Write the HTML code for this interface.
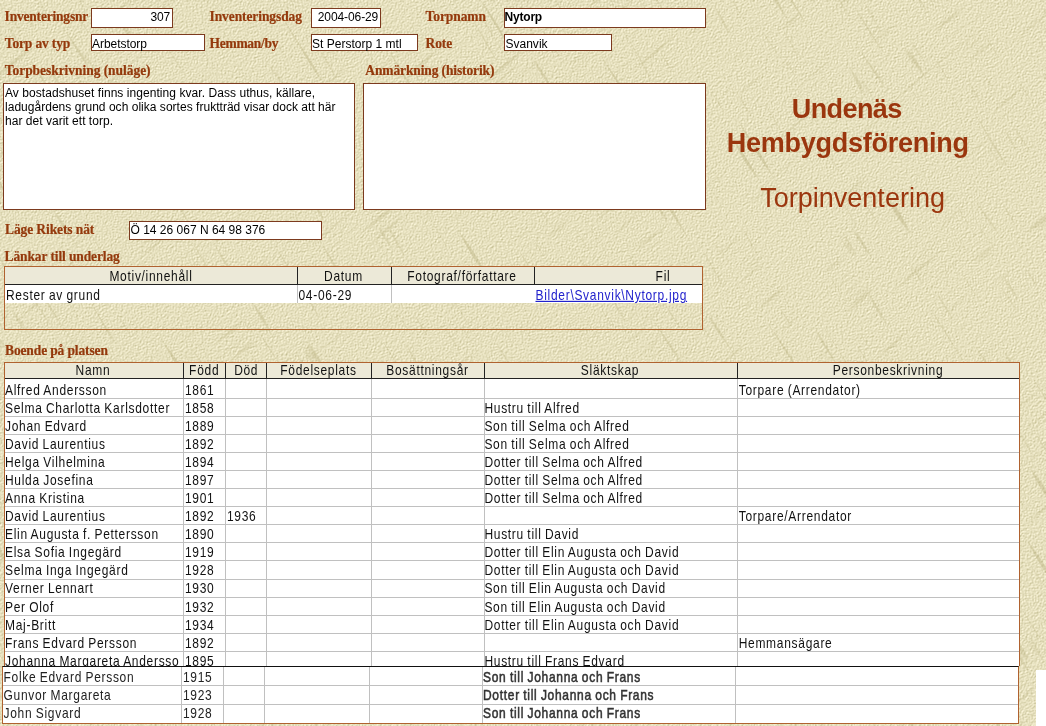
<!DOCTYPE html>
<html lang="sv"><head><meta charset="utf-8"><title>Torpinventering</title>
<style>
html,body{margin:0;padding:0}
body{width:1046px;height:726px;position:relative;overflow:hidden;background:#e4debc;font-family:"Liberation Sans",sans-serif;font-size:12px;color:#000}
.a{position:absolute;white-space:nowrap;line-height:1}
.box{position:absolute;background:#fff;border:1px solid #7c3a1e;box-sizing:border-box}
.lb{font-family:"Liberation Serif",serif;font-weight:bold;font-size:13.5px;color:#94390c;-webkit-text-stroke:.2px #94390c;transform:scaleY(1.04);transform-origin:0 100%}
.in{font-size:12px}
.b{font-weight:bold}
.t1{font-size:27px;font-weight:bold;color:#9b360e}
.t2{font-size:27px;color:#9b360e}
.c{font-size:12px;letter-spacing:.7px;word-spacing:-.6px;color:#111;transform:scaleY(1.2);transform-origin:50% 100%}
.g{color:#333;-webkit-text-stroke:.45px #333}
.g2{color:#222}
.hl{position:absolute;height:1px;background:#c0c0c0}
.vl{position:absolute;width:1px;background:#c0c0c0}
a{color:#2222cc}
</style></head><body>
<svg width="1046" height="726" style="position:absolute;left:0;top:0" aria-hidden="true">
<filter id="p" x="0" y="0" width="100%" height="100%" color-interpolation-filters="sRGB">
<feTurbulence type="fractalNoise" baseFrequency="0.8" numOctaves="2" seed="7" result="n"/>
<feDiffuseLighting in="n" surfaceScale="0.7" diffuseConstant="1" lighting-color="#fff" result="l"><feDistantLight azimuth="225" elevation="50"/></feDiffuseLighting>
<feColorMatrix in="l" type="matrix" values="0.7 0 0 0 0.366  0 0.7 0 0 0.343  0 0 0.9 0 0.058  0 0 0 1 0"/>
</filter>
<filter id="s" x="0" y="0" width="100%" height="100%" color-interpolation-filters="sRGB">
<feTurbulence type="fractalNoise" baseFrequency="0.016 0.22" numOctaves="1" seed="11"/>
<feColorMatrix type="matrix" values="0 0 0 0 0.74  0 0 0 0 0.71  0 0 0 0 0.52  10 0 0 0 -6.7"/>
</filter>
<filter id="s2" x="0" y="0" width="100%" height="100%" color-interpolation-filters="sRGB">
<feTurbulence type="fractalNoise" baseFrequency="0.016 0.22" numOctaves="1" seed="23"/>
<feColorMatrix type="matrix" values="0 0 0 0 0.74  0 0 0 0 0.71  0 0 0 0 0.52  10 0 0 0 -6.7"/>
</filter>
<rect width="1046" height="726" filter="url(#p)"/>
<g transform="rotate(58)" opacity="0.45"><rect x="0" y="-900" width="1400" height="1300" filter="url(#s)"/></g>
<g transform="rotate(-40)" opacity="0.3"><rect x="-500" y="0" width="1400" height="1300" filter="url(#s2)"/></g>
</svg>
<div id="w" style="position:absolute;left:0;top:0;width:1046px;height:726px;will-change:opacity">

<div class="box" style="left:91px;top:8px;width:82px;height:20px"></div>
<div class="box" style="left:311px;top:8px;width:70px;height:20px"></div>
<div class="box" style="left:504px;top:8px;width:202px;height:20px"></div>
<div class="box" style="left:91px;top:34px;width:114px;height:17px"></div>
<div class="box" style="left:311px;top:34px;width:107px;height:17px"></div>
<div class="box" style="left:504px;top:34px;width:108px;height:17px"></div>
<div class="box" style="left:3px;top:83px;width:352px;height:127px"></div>
<div class="box" style="left:363px;top:83px;width:343px;height:127px"></div>
<div class="box" style="left:129px;top:221px;width:193px;height:19px"></div>
<div style="position:absolute;left:4px;top:266px;width:699px;height:64px;border:1px solid #b0622f;box-sizing:border-box"></div>
<div style="position:absolute;left:5px;top:267px;width:697px;height:17px;background:#ece9d8"></div>
<div style="position:absolute;left:5px;top:284px;width:697px;height:1px;background:#222"></div>
<div style="position:absolute;left:5px;top:285px;width:697px;height:18px;background:#fff"></div>
<div style="position:absolute;left:297px;top:267px;width:1px;height:18px;background:#222"></div>
<div style="position:absolute;left:391px;top:267px;width:1px;height:18px;background:#222"></div>
<div style="position:absolute;left:534px;top:267px;width:1px;height:18px;background:#222"></div>
<div class="vl" style="left:297px;top:285px;height:18px"></div>
<div class="vl" style="left:391px;top:285px;height:18px"></div>
<span class="a c" style="left:51px;width:200px;text-align:center;top:271px">Motiv/innehåll</span>
<span class="a c" style="left:243.5px;width:200px;text-align:center;top:271px">Datum</span>
<span class="a c" style="left:362px;width:200px;text-align:center;top:271px">Fotograf/författare</span>
<span class="a c" style="left:563px;width:200px;text-align:center;top:271px">Fil</span>
<span class="a c" style="left:6px;top:290px">Rester av grund</span>
<span class="a c" style="left:298.5px;top:290px">04-06-29</span>
<span class="a c" style="left:535.5px;top:290px"><a href="#" style="text-decoration:underline">Bilder\Svanvik\Nytorp.jpg</a></span>
<div style="position:absolute;left:4px;top:362px;width:1016px;height:304px;border:1px solid #b0622f;border-bottom:none;box-sizing:border-box;background:#fff"></div>
<div style="position:absolute;left:5px;top:363px;width:1014px;height:15px;background:#ece9d8"></div>
<div style="position:absolute;left:5px;top:378px;width:1014px;height:1px;background:#222"></div>
<div style="position:absolute;left:183px;top:363px;width:1px;height:16px;background:#222"></div>
<div class="vl" style="left:183px;top:379px;height:287px"></div>
<div style="position:absolute;left:225px;top:363px;width:1px;height:16px;background:#222"></div>
<div class="vl" style="left:225px;top:379px;height:287px"></div>
<div style="position:absolute;left:266px;top:363px;width:1px;height:16px;background:#222"></div>
<div class="vl" style="left:266px;top:379px;height:287px"></div>
<div style="position:absolute;left:371px;top:363px;width:1px;height:16px;background:#222"></div>
<div class="vl" style="left:371px;top:379px;height:287px"></div>
<div style="position:absolute;left:484px;top:363px;width:1px;height:16px;background:#222"></div>
<div class="vl" style="left:484px;top:379px;height:287px"></div>
<div style="position:absolute;left:737px;top:363px;width:1px;height:16px;background:#222"></div>
<div class="vl" style="left:737px;top:379px;height:287px"></div>
<div class="hl" style="left:5px;top:398px;width:1014px"></div>
<div class="hl" style="left:5px;top:416px;width:1014px"></div>
<div class="hl" style="left:5px;top:434px;width:1014px"></div>
<div class="hl" style="left:5px;top:452px;width:1014px"></div>
<div class="hl" style="left:5px;top:470px;width:1014px"></div>
<div class="hl" style="left:5px;top:488px;width:1014px"></div>
<div class="hl" style="left:5px;top:506px;width:1014px"></div>
<div class="hl" style="left:5px;top:524px;width:1014px"></div>
<div class="hl" style="left:5px;top:542px;width:1014px"></div>
<div class="hl" style="left:5px;top:560px;width:1014px"></div>
<div class="hl" style="left:5px;top:579px;width:1014px"></div>
<div class="hl" style="left:5px;top:597px;width:1014px"></div>
<div class="hl" style="left:5px;top:615px;width:1014px"></div>
<div class="hl" style="left:5px;top:633px;width:1014px"></div>
<div class="hl" style="left:5px;top:651px;width:1014px"></div>
<span class="a c" style="left:-7px;width:200px;text-align:center;top:365px">Namn</span>
<span class="a c" style="left:104.19999999999999px;width:200px;text-align:center;top:365px">Född</span>
<span class="a c" style="left:146.2px;width:200px;text-align:center;top:365px">Död</span>
<span class="a c" style="left:218.5px;width:200px;text-align:center;top:365px">Födelseplats</span>
<span class="a c" style="left:327.5px;width:200px;text-align:center;top:365px">Bosättningsår</span>
<span class="a c" style="left:510px;width:200px;text-align:center;top:365px">Släktskap</span>
<span class="a c" style="left:788px;width:200px;text-align:center;top:365px">Personbeskrivning</span>
<div style="position:absolute;left:0;top:0;width:1046px;height:666px;overflow:hidden">
<span class="a c" style="left:5px;top:385px">Alfred Andersson</span>
<span class="a c" style="left:185px;top:385px">1861</span>
<span class="a c" style="left:738.7px;top:385px">Torpare (Arrendator)</span>
<span class="a c" style="left:5px;top:403px">Selma Charlotta Karlsdotter</span>
<span class="a c" style="left:185px;top:403px">1858</span>
<span class="a c" style="left:484.4px;top:403px">Hustru till Alfred</span>
<span class="a c" style="left:5px;top:421px">Johan Edvard</span>
<span class="a c" style="left:185px;top:421px">1889</span>
<span class="a c" style="left:484.4px;top:421px">Son till Selma och Alfred</span>
<span class="a c" style="left:5px;top:439px">David Laurentius</span>
<span class="a c" style="left:185px;top:439px">1892</span>
<span class="a c" style="left:484.4px;top:439px">Son till Selma och Alfred</span>
<span class="a c" style="left:5px;top:457px">Helga Vilhelmina</span>
<span class="a c" style="left:185px;top:457px">1894</span>
<span class="a c" style="left:484.4px;top:457px">Dotter till Selma och Alfred</span>
<span class="a c" style="left:5px;top:475px">Hulda Josefina</span>
<span class="a c" style="left:185px;top:475px">1897</span>
<span class="a c" style="left:484.4px;top:475px">Dotter till Selma och Alfred</span>
<span class="a c" style="left:5px;top:493px">Anna Kristina</span>
<span class="a c" style="left:185px;top:493px">1901</span>
<span class="a c" style="left:484.4px;top:493px">Dotter till Selma och Alfred</span>
<span class="a c" style="left:5px;top:511px">David Laurentius</span>
<span class="a c" style="left:185px;top:511px">1892</span>
<span class="a c" style="left:227px;top:511px">1936</span>
<span class="a c" style="left:738.7px;top:511px">Torpare/Arrendator</span>
<span class="a c" style="left:5px;top:529px">Elin Augusta f. Pettersson</span>
<span class="a c" style="left:185px;top:529px">1890</span>
<span class="a c" style="left:484.4px;top:529px">Hustru till David</span>
<span class="a c" style="left:5px;top:547px">Elsa Sofia Ingegärd</span>
<span class="a c" style="left:185px;top:547px">1919</span>
<span class="a c" style="left:484.4px;top:547px">Dotter till Elin Augusta och David</span>
<span class="a c" style="left:5px;top:565px">Selma Inga Ingegärd</span>
<span class="a c" style="left:185px;top:565px">1928</span>
<span class="a c" style="left:484.4px;top:565px">Dotter till Elin Augusta och David</span>
<span class="a c" style="left:5px;top:583px">Verner Lennart</span>
<span class="a c" style="left:185px;top:583px">1930</span>
<span class="a c" style="left:484.4px;top:583px">Son till Elin Augusta och David</span>
<span class="a c" style="left:5px;top:602px">Per Olof</span>
<span class="a c" style="left:185px;top:602px">1932</span>
<span class="a c" style="left:484.4px;top:602px">Son till Elin Augusta och David</span>
<span class="a c" style="left:5px;top:620px">Maj-Britt</span>
<span class="a c" style="left:185px;top:620px">1934</span>
<span class="a c" style="left:484.4px;top:620px">Dotter till Elin Augusta och David</span>
<span class="a c" style="left:5px;top:638px">Frans Edvard Persson</span>
<span class="a c" style="left:185px;top:638px">1892</span>
<span class="a c" style="left:738.7px;top:638px">Hemmansägare</span>
<span class="a c" style="left:5px;top:656px">Johanna Margareta Andersso</span>
<span class="a c" style="left:185px;top:656px">1895</span>
<span class="a c" style="left:484.4px;top:656px">Hustru till Frans Edvard</span>
</div>
<div style="position:absolute;left:2px;top:666px;width:1017px;height:58px;background:#fff;border:1px solid #b0622f;border-top:1px solid #111;box-sizing:border-box"></div>
<div class="vl" style="left:181px;top:667px;height:56px"></div>
<div class="vl" style="left:223px;top:667px;height:56px"></div>
<div class="vl" style="left:264px;top:667px;height:56px"></div>
<div class="vl" style="left:369px;top:667px;height:56px"></div>
<div class="vl" style="left:482px;top:667px;height:56px"></div>
<div class="vl" style="left:735px;top:667px;height:56px"></div>
<div class="hl" style="left:3px;top:685px;width:1015px"></div>
<div class="hl" style="left:3px;top:704px;width:1015px"></div>
<span class="a c g2" style="left:3.5px;top:672px">Folke Edvard Persson</span>
<span class="a c g2" style="left:183px;top:672px">1915</span>
<span class="a c g" style="left:483px;top:672px">Son till Johanna och Frans</span>
<span class="a c g2" style="left:3.5px;top:690px">Gunvor Margareta</span>
<span class="a c g2" style="left:183px;top:690px">1923</span>
<span class="a c g" style="left:483px;top:690px">Dotter till Johanna och Frans</span>
<span class="a c g2" style="left:3.5px;top:708px">John Sigvard</span>
<span class="a c g2" style="left:183px;top:708px">1928</span>
<span class="a c g" style="left:483px;top:708px">Son till Johanna och Frans</span>
<div style="position:absolute;left:1036px;top:670px;width:10px;height:56px;background:#fff"></div>
<span class="a lb" id="t0" style="left:4.6px;top:10px;letter-spacing:-0.197px;">Inventeringsnr</span>
<span class="a lb" id="t1" style="left:209.5px;top:10px;letter-spacing:-0.090px;">Inventeringsdag</span>
<span class="a lb" id="t2" style="left:425.6px;top:10px;letter-spacing:-0.090px;">Torpnamn</span>
<span class="a lb" id="t3" style="left:4.8px;top:37px;letter-spacing:-0.153px;">Torp av typ</span>
<span class="a lb" id="t4" style="left:209.5px;top:37px;letter-spacing:-0.283px;">Hemman/by</span>
<span class="a lb" id="t5" style="left:425.6px;top:37px;letter-spacing:-0.133px;">Rote</span>
<span class="a lb" id="t6" style="left:4.8px;top:64px;letter-spacing:-0.049px;">Torpbeskrivning (nuläge)</span>
<span class="a lb" id="t7" style="left:365.3px;top:64px;letter-spacing:-0.128px;">Anmärkning (historik)</span>
<span class="a lb" id="t8" style="left:5px;top:223px;letter-spacing:-0.104px;">Läge Rikets nät</span>
<span class="a lb" id="t9" style="left:4.6px;top:250px;letter-spacing:-0.123px;">Länkar till underlag</span>
<span class="a lb" id="t10" style="left:5px;top:344px;letter-spacing:-0.127px;">Boende på platsen</span>
<span class="a in" id="t11" style="left:150.6px;top:11px;letter-spacing:-0.166px;">307</span>
<span class="a in" id="t12" style="left:317.8px;top:11px;letter-spacing:-0.099px;">2004-06-29</span>
<span class="a in b" id="t13" style="left:504.6px;top:11px;letter-spacing:-0.214px;">Nytorp</span>
<span class="a in" id="t14" style="left:92px;top:38px;letter-spacing:-0.040px;">Arbetstorp</span>
<span class="a in" id="t15" style="left:312.1px;top:38px;letter-spacing:0.008px;">St Perstorp 1 mtl</span>
<span class="a in" id="t16" style="left:505.4px;top:38px;letter-spacing:0.028px;">Svanvik</span>
<span class="a in" id="t17" style="left:5px;top:87px;letter-spacing:0.059px;">Av bostadshuset finns ingenting kvar. Dass uthus, källare,</span>
<span class="a in" id="t18" style="left:5px;top:101px;letter-spacing:0.027px;">ladugårdens grund och olika sortes fruktträd visar dock att här</span>
<span class="a in" id="t19" style="left:5px;top:115px;letter-spacing:0.027px;">har det varit ett torp.</span>
<span class="a in" id="t20" style="left:130.5px;top:224px;letter-spacing:0.001px;">Ö 14 26 067 N 64 98 376</span>
<span class="a t1" id="t21" style="left:791.8px;top:96px;letter-spacing:-0.605px;">Undenäs</span>
<span class="a t1" id="t22" style="left:726.8px;top:130px;letter-spacing:-0.255px;">Hembygdsförening</span>
<span class="a t2" id="t23" style="left:760.2px;top:185px;letter-spacing:0.012px;">Torpinventering</span>
</div></body></html>
